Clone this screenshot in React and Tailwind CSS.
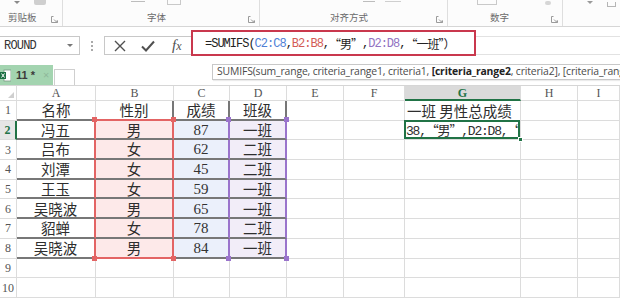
import React from "react";

const ROWS = [
  ["名称", "性别", "成绩", "班级"],
  ["冯五", "男", "87", "一班"],
  ["吕布", "女", "62", "二班"],
  ["刘潭", "女", "45", "二班"],
  ["王玉", "女", "59", "一班"],
  ["吴晓波", "男", "65", "一班"],
  ["貂蝉", "女", "78", "二班"],
  ["吴晓波", "男", "84", "一班"],
];

const COLS = ["A", "B", "C", "D", "E", "F", "G", "H", "I"];

const MONO = "font-[family-name:'Liberation_Mono','Noto_Sans_CJK_SC',monospace]";
const SERIF = "font-[family-name:'Liberation_Serif','Noto_Sans_CJK_SC',serif]";
const CJK = "font-[family-name:'Noto_Sans_CJK_SC',sans-serif]";

function Launcher() {
  return (
    <svg width="7" height="7" viewBox="0 0 7 7" className="absolute bottom-[3px] right-[4px]">
      <path d="M0.5 0.5h2M0.5 0.5v6h6v-2" stroke="#9a9a9a" fill="none" strokeWidth="1" />
      <path d="M3 3.5l3 3M6 4.5v2h-2" stroke="#9a9a9a" fill="none" strokeWidth="1" />
    </svg>
  );
}

function Group({ width, label, pad, last, children }) {
  return (
    <div className={`relative flex h-full flex-col justify-between ${width} ${last ? "" : "border-r border-[#dedede]"}`}>
      <div className="flex h-[7px] items-start overflow-hidden">{children}</div>
      <div className={`${CJK} ${pad} pb-[3px] text-left text-[9.5px] leading-[12px] text-[#6a6a6a]`}>{label}</div>
      {!last && <Launcher />}
    </div>
  );
}

function Ribbon() {
  return (
    <div className="flex h-[27px] border-b border-[#d6d6d6] bg-[#fcfcfc]">
      <Group width="w-[63px]" pad="pl-[8px]" label="剪贴板">
        <span className="ml-[14px] mt-[1px] h-0 w-0 border-x-[3px] border-t-[3px] border-x-transparent border-t-[#8a8a8a]" />
        <span className="ml-[14px] h-[5px] w-[12px] rounded-b-[2px] bg-[#cfcfcf]" />
      </Group>
      <Group width="w-[197px]" pad="pl-[84px]" label="字体">
        <span className="ml-[68px] mt-[1px] h-px w-[14px] bg-[#bdbdbd]" />
        <span className="ml-[22px] h-[5px] w-[14px] border-x border-b border-[#c9c9c9]" />
      </Group>
      <Group width="w-[188px]" pad="pl-[70px]" label="对齐方式">
        <span className="ml-[103px] mt-[1px] h-px w-[12px] bg-[#bdbdbd]" />
        <span className="ml-[10px] mt-[1px] h-px w-[16px] bg-[#cfcfcf]" />
      </Group>
      <Group width="w-[115px]" pad="pl-[42px]" label="数字">
        <span className="ml-[29px] h-[5px] w-[20px] border-x border-b border-[#c9c9c9]" />
        <span className="ml-[48px] mt-[1px] h-[4px] w-[6px] rounded-full bg-[#d6d6d6]" />
      </Group>
      <Group width="flex-1" pad="" label="" last>
        <span className="ml-[24px] mt-[1px] h-0 w-0 border-x-[3px] border-t-[3px] border-x-transparent border-t-[#9a9a9a]" />
        <span className="ml-[14px] mt-[2px] h-[5px] w-[9px] border-x border-b border-[#b5b5b5]" />
      </Group>
    </div>
  );
}

function FormulaBar() {
  return (
    <div className="flex h-[29px] items-end bg-white">
      <div className="mb-[1px] flex h-[19px] w-[80px] items-center justify-between border border-l-0 border-[#c8c8c8] pl-[4px] pr-[6px]">
        <span className={`${MONO} pt-[1px] text-[12px] tracking-[-0.8px] text-[#333]`}>ROUND</span>
        <span className="h-0 w-0 border-x-[3px] border-t-[3px] border-x-transparent border-t-[#777]" />
      </div>
      <div className="mb-[5px] flex w-[24px] flex-col items-center gap-[2px]">
        <span className="h-[2px] w-[2px] bg-[#aaa]" />
        <span className="h-[2px] w-[2px] bg-[#aaa]" />
        <span className="h-[2px] w-[2px] bg-[#aaa]" />
      </div>
      <div className="mb-[1px] flex h-[19px] w-[87px] items-center border border-r-0 border-[#c8c8c8] pl-[9px]">
        <svg width="12" height="12" viewBox="0 0 12 12">
          <path d="M1 1l10 10M11 1L1 11" stroke="#505050" strokeWidth="1.4" />
        </svg>
        <svg width="14" height="12" viewBox="0 0 14 12" className="ml-[15px]">
          <path d="M1 6.5l4 4L13 1.5" stroke="#505050" strokeWidth="2" fill="none" />
        </svg>
        <span className="ml-[17px] font-[family-name:'Liberation_Serif',serif] text-[15px] italic leading-none text-[#505050]">
          f<span className="text-[12px]">x</span>
        </span>
      </div>
      <div className="flex flex-1 items-end">
        <div className={`${MONO} flex h-[26px] w-[285px] items-center border-2 border-[#c9384d] pl-[12px] pt-[1px] text-[12px] tracking-[-1px] text-[#222] whitespace-nowrap`}>
          <span>=SUMIFS(</span>
          <span className="text-[#4f7fd6]">C2:C8</span>
          <span>,</span>
          <span className="text-[#d35b55]">B2:B8</span>
          <span>,</span>
          <span className={CJK}>“男”</span>
          <span>,</span>
          <span className="text-[#9272c2]">D2:D8</span>
          <span>,</span>
          <span className={CJK}>“一班”）</span>
        </div>
        <div className="mb-[1px] h-[19px] flex-1 border-y border-[#e2e2e2]" />
      </div>
    </div>
  );
}

function TabRow() {
  return (
    <div className="flex h-[29px] items-end bg-white">
      <div className="flex h-[20px] w-[53px] items-center bg-[#a3d4b0]">
        <svg width="11" height="13" viewBox="0 0 11 13">
          <rect x="4" y="1" width="7" height="11" fill="#fff" stroke="#7a9a85" strokeWidth="0.8" />
          <rect x="0" y="3" width="6" height="7" fill="#1e7145" />
          <path d="M1.5 4.5l3 4M4.5 4.5l-3 4" stroke="#fff" strokeWidth="1" />
        </svg>
        <span className="ml-[5px] font-[family-name:'Liberation_Sans',sans-serif] text-[11px] font-bold text-[#3b3b3b]">11 *</span>
        <span className="ml-[8px] text-[11px] text-[#8fb89a]">×</span>
      </div>
      <div className="ml-[1px] h-[16px] w-[21px] border border-b-0 border-[#cfcfcf] bg-white" />
      <div className="ml-[137px] mt-[8px] flex h-[16px] flex-1 items-center self-start overflow-hidden border border-r-0 border-[#c8c8c8] bg-white pl-[4px] shadow-[1px_1px_1px_rgba(0,0,0,0.08)]">
        <span className="whitespace-nowrap font-[family-name:'Open_Sans',sans-serif] text-[10.4px] tracking-[-0.15px] text-[#4a4a4a]">
          SUMIFS(sum_range, criteria_range1, criteria1, <b className="text-[#222]">[criteria_range2</b>, criteria2], [criteria_range
        </span>
      </div>
    </div>
  );
}

function cellClass(r, c) {
  const cls = ["relative flex items-center whitespace-nowrap border-r border-b border-[#dcdcdc]"];
  const inTable = r >= 1 && r <= 8 && c <= 3;
  if (inTable) cls.push("justify-center pt-[1px] border-b-2 border-b-[#777777]");
  if (r === 1 && c >= 1 && c <= 3) cls.push("border-r-2 border-r-[#777777]");
  if (r >= 2 && r <= 8) {
    if (c === 0 || c === 1) cls.push("border-r-2 border-r-[#e36464]");
    if (c === 2 || c === 3) cls.push("border-r-2 border-r-[#9a74cc]");
    if (c === 1) cls.push("bg-[#fde9e9]");
    if (c === 2) cls.push("bg-[#ebf0fb]");
    if (c === 3) cls.push("bg-[#f2edf8]");
  }
  if (r === 1 || r === 8) {
    if (c === 1) cls.push("border-b-[#e36464]");
    if (c === 2) cls.push("border-b-[#6f9ae6]");
    if (c === 3) cls.push("border-b-[#9a74cc]");
  }
  return cls.join(" ");
}

function Corner({ pos, color }) {
  return <span className={`absolute z-10 h-[5px] w-[5px] ${pos} ${color}`} />;
}

function Sheet() {
  const body = [];
  for (let r = 1; r <= 10; r++) {
    body.push(
      <div
        key={`h${r}`}
        className={`flex items-center justify-center border-b border-[#dcdcdc] ${SERIF} text-[12px] ${
          r === 2 ? "border-r-2 border-r-[#217346] bg-[#e6e6e6] font-bold text-[#217346]" : "border-r text-[#555]"
        }`}
      >
        {r}
      </div>
    );
    for (let c = 0; c < 9; c++) {
      const v = r <= 8 && c <= 3 ? ROWS[r - 1][c] : null;
      const isNum = v && /^\d+$/.test(v);
      body.push(
        <div key={`${r}-${c}`} className={cellClass(r, c)}>
          {v && (
            <span className={isNum ? `${SERIF} text-[15px] text-[#333]` : `${CJK} text-[14.5px] leading-none text-[#2e2e2e]`}>
              {v}
            </span>
          )}
          {r === 1 && c === 6 && (
            <span className={`${CJK} pl-[2px] pt-[1px] text-[14.5px] leading-none text-[#2e2e2e]`}>一班 男性总成绩</span>
          )}
          {r === 2 && c === 6 && (
            <>
              <span className={`${MONO} overflow-hidden pl-[1px] pt-[1px] text-[13px] tracking-[-1.2px] text-[#2e2e2e]`}>
                38,<span className={CJK}>“男”</span>,D2:D8,<span className={CJK}>“</span>
              </span>
              <span className="absolute -left-px -top-px bottom-0 right-0 z-10 border-2 border-[#217346]" />
              <span className="absolute -bottom-[3px] -right-[3px] z-20 h-[5px] w-[5px] border border-white bg-[#217346]" />
            </>
          )}
          {r === 2 && c === 1 && (
            <>
              <Corner pos="-left-[4px] -top-[4px]" color="bg-[#e36464]" />
              <Corner pos="-right-[4px] -top-[4px]" color="bg-[#e36464]" />
            </>
          )}
          {r === 8 && c === 1 && (
            <>
              <Corner pos="-left-[4px] -bottom-[4px]" color="bg-[#e36464]" />
              <Corner pos="-right-[4px] -bottom-[4px]" color="bg-[#e36464]" />
            </>
          )}
          {r === 2 && c === 3 && (
            <>
              <Corner pos="-left-[4px] -top-[4px]" color="bg-[#9a74cc]" />
              <Corner pos="-right-[4px] -top-[4px]" color="bg-[#9a74cc]" />
            </>
          )}
          {r === 8 && c === 3 && (
            <>
              <Corner pos="-left-[4px] -bottom-[4px]" color="bg-[#9a74cc]" />
              <Corner pos="-right-[4px] -bottom-[4px]" color="bg-[#9a74cc]" />
            </>
          )}
        </div>
      );
    }
  }

  return (
    <div className="grid grid-cols-[17px_79px_78px_56px_57px_57px_61px_116px_57px_1fr] grid-rows-[15px_repeat(10,19.7px)] border-t border-[#d6d6d6] bg-white">
      <div className="flex items-end justify-end border-r border-b border-[#dcdcdc] bg-white pb-[2px] pr-[2px]">
        <svg width="6" height="6" viewBox="0 0 6 6">
          <path d="M6 0V6H0Z" fill="#cfcfcf" />
        </svg>
      </div>
      {COLS.map((l) => (
        <div
          key={l}
          className={`flex items-center justify-center border-r border-[#dcdcdc] ${SERIF} text-[12px] ${
            l === "G" ? "border-b-2 border-b-[#217346] bg-[#dadada] font-bold text-[#217346]" : "border-b bg-white text-[#555]"
          }`}
        >
          {l}
        </div>
      ))}
      {body}
    </div>
  );
}

export default function App() {
  return (
    <div className="h-[300px] w-[620px] overflow-hidden bg-white">
      <Ribbon />
      <FormulaBar />
      <TabRow />
      <Sheet />
    </div>
  );
}
